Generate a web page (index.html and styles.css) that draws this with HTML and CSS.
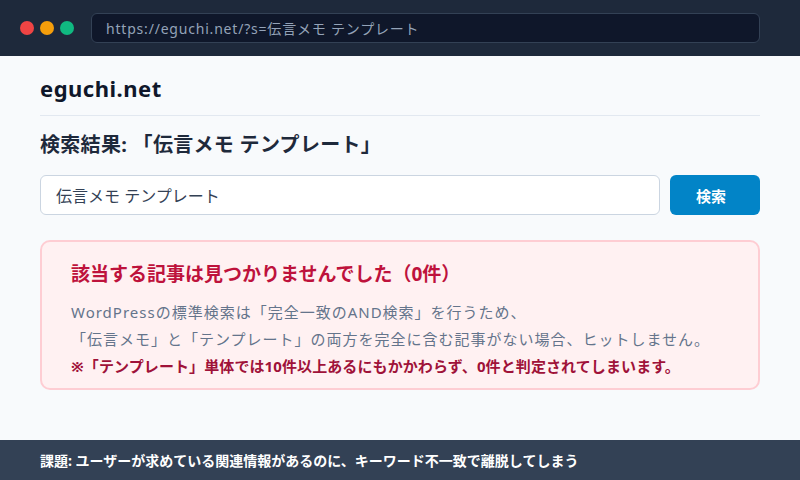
FILE: index.html
```html
<!DOCTYPE html>
<html lang="ja">
<head>
    <meta charset="UTF-8">
    <meta name="viewport" content="width=device-width, initial-scale=1.0">
    <title>eguchi.net 検索結果</title>
    <link rel="stylesheet" href="styles.css">
</head>
<body>

    <div class="browser-bar">
        <div class="dots">
            <span class="dot red"></span>
            <span class="dot yellow"></span>
            <span class="dot green"></span>
        </div>
        <div class="address">https://eguchi.net/?s=伝言メモ テンプレート</div>
    </div>

    <div class="page">
        <div class="site-header">eguchi.net</div>

        <h1 class="result-title">検索結果: 「伝言メモ テンプレート」</h1>

        <form class="search-form" onsubmit="return false;">
            <input class="search-input" type="text" value="伝言メモ テンプレート">
            <button class="search-button" type="submit">検索</button>
        </form>

        <div class="no-result">
            <h2>該当する記事は見つかりませんでした（0件）</h2>
            <p>WordPressの標準検索は「完全一致のAND検索」を行うため、<br>「伝言メモ」と「テンプレート」の両方を完全に含む記事がない場合、ヒットしません。</p>
            <p class="note">※「テンプレート」単体では10件以上あるにもかかわらず、0件と判定されてしまいます。</p>
        </div>
    </div>

    <div class="footer">課題: ユーザーが求めている関連情報があるのに、キーワード不一致で離脱してしまう</div>

</body>
</html>
```

FILE: styles.css
```css
* {
    box-sizing: border-box;
}

body {
    margin: 0;
    padding: 0;
    height: 100vh;
    display: flex;
    flex-direction: column;
    background: #f8fafc;
    font-family: "Noto Sans", "Noto Sans CJK JP", sans-serif;
    color: #1e293b;
    overflow: hidden;
}

.browser-bar {
    height: 56px;
    background: #1e293b;
    display: flex;
    align-items: center;
    padding: 0 40px 0 20px;
}

.dots {
    display: flex;
    gap: 6px;
    margin-right: 17px;
}

.dot {
    width: 14px;
    height: 14px;
    border-radius: 50%;
}

.dot.red { background: #ef4444; }
.dot.yellow { background: #f59e0b; }
.dot.green { background: #10b981; }

.address {
    flex: 1;
    height: 30px;
    background: #0f172a;
    border: 1px solid #334155;
    border-radius: 6px;
    padding: 0 14px;
    display: flex;
    align-items: center;
    color: #94a3b8;
    font-size: 14px;
    letter-spacing: 0.8px;
}

.page {
    flex: 1;
    padding: 16px 40px 0;
}

.site-header {
    font-size: 22px;
    font-weight: 700;
    line-height: 32px;
    letter-spacing: 0.5px;
    color: #0f172a;
    padding-bottom: 11px;
    border-bottom: 1px solid #e2e8f0;
}

.result-title {
    margin: 15px 0 0;
    font-size: 20px;
    line-height: 28px;
    font-weight: 700;
    letter-spacing: 0.3px;
    color: #1e293b;
}

.search-form {
    display: flex;
    gap: 10px;
    margin-top: 16px;
}

.search-input {
    flex: 1;
    height: 40px;
    border: 1px solid #cbd5e1;
    border-radius: 6px;
    background: #fff;
    padding: 0 15px;
    font-family: inherit;
    font-size: 16px;
    color: #334155;
    outline: none;
}

.search-button {
    width: 90px;
    height: 40px;
    border: none;
    border-radius: 6px;
    background: #0284c7;
    color: #fff;
    font-family: inherit;
    font-size: 15px;
    font-weight: 700;
    text-align: left;
    padding: 0 0 0 26px;
    cursor: pointer;
}

.no-result {
    margin-top: 25px;
    height: 150px;
    background: #fff1f2;
    border: 2px solid #fecdd3;
    border-radius: 10px;
    padding: 20px 29px 0;
}

.no-result h2 {
    margin: 0;
    font-size: 19px;
    line-height: 24px;
    font-weight: 700;
    color: #be123c;
}

.no-result p {
    margin: 13px 0 0;
    font-size: 15px;
    line-height: 27px;
    letter-spacing: 1px;
    color: #64748b;
}

.no-result .note {
    margin: 0;
    font-size: 15px;
    line-height: 26px;
    font-weight: 700;
    letter-spacing: 0.1px;
    color: #9f1239;
}

.footer {
    height: 40px;
    background: #334155;
    color: #fff;
    font-size: 14px;
    font-weight: 700;
    display: flex;
    align-items: center;
    padding: 0 40px;
}
```
